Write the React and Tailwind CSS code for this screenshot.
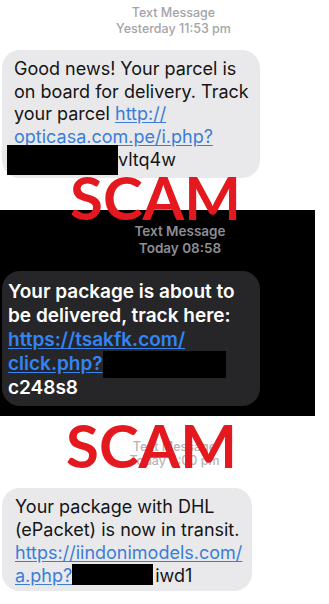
export default function App() {
  return (
    <div className="relative w-[329px] h-[604px] bg-white overflow-hidden font-['Inter',sans-serif]">
      {/* message 1 */}
      <div className="pt-[5px] pl-[18px] text-center text-[12.5px] leading-[16px] font-medium text-[#a4a4a8]">
        <p>Text Message</p>
        <p>Yesterday 11:53 pm</p>
      </div>
      <div className="relative mt-[13px] ml-[2px] w-[258px] rounded-[18px] bg-[#e9e9eb] pl-[12px] pt-[8px] pb-[6px] text-[18px] leading-[22.7px] text-[#151515] whitespace-nowrap">
        Good news! Your parcel is<br />
        on board for delivery. Track<br />
        your parcel <span className="text-[#3b7dd8] underline underline-offset-2">http://</span><br />
        <span className="text-[#3b7dd8] underline underline-offset-2">opticasa.com.pe/i.php?</span><br />
        <span className="inline-block w-[104px]" />vltq4w
        <div className="absolute left-[5px] top-[95px] w-[111px] h-[30px] bg-black" />
      </div>

      {/* message 2 */}
      <div className="mt-[32px] w-[315px] bg-black pb-[10px]">
        <div className="pt-[13px] pl-[45px] text-center text-[13.5px] leading-[17px] font-semibold text-[#8e8e93]">
          <p>Text Message</p>
          <p>Today 08:58</p>
        </div>
        <div className="relative mt-[14px] ml-[2px] w-[258px] rounded-[18px] bg-[#262628] pl-[6px] pt-[9px] pb-[5px] text-[19px] leading-[24.2px] font-semibold text-white whitespace-nowrap">
          Your package is about to<br />
          be delivered, track here:<br />
          <span className="text-[#3384f4] underline underline-offset-2">https://tsakfk.com/</span><br />
          <span className="text-[#3384f4] underline underline-offset-2">click.php?</span><br />
          c248s8
          <div className="absolute left-[101px] top-[80px] w-[123px] h-[27px] bg-black" />
        </div>
      </div>

      {/* message 3 */}
      <div className="pt-[24px] pl-[20px] text-center text-[12.5px] leading-[14px] font-medium text-[#b4b4b8]">
        <p>Text Message</p>
        <p>Today 4:00 pm</p>
      </div>
      <div className="mt-[20px] ml-[2px] w-[250px] rounded-[18px] bg-[#e9e9eb] pl-[13px] pt-[7px] pb-[3px] text-[18px] leading-[23.3px] text-[#151515] whitespace-nowrap">
        Your package with DHL<br />
        (ePacket) is now in transit.<br />
        <span className="text-[#3b7dd8] underline underline-offset-2">https://iindonimodels.com/</span><br />
        <span className="text-[#3b7dd8] underline underline-offset-2">a.php?</span>
        <span className="inline-block w-[81px] h-[21px] align-[-3px] bg-black" />
        <span className="ml-[2px]">iwd1</span>
      </div>

      {/* SCAM labels */}
      <div className="absolute left-[70px] top-[167px] text-[60px] leading-none font-bold text-[#e3191f] font-['Lato',sans-serif]">
        SCAM
      </div>
      <div className="absolute left-[66px] top-[415px] text-[60px] leading-none font-bold text-[#e3191f] font-['Lato',sans-serif]">
        SCAM
      </div>
    </div>
  );
}
